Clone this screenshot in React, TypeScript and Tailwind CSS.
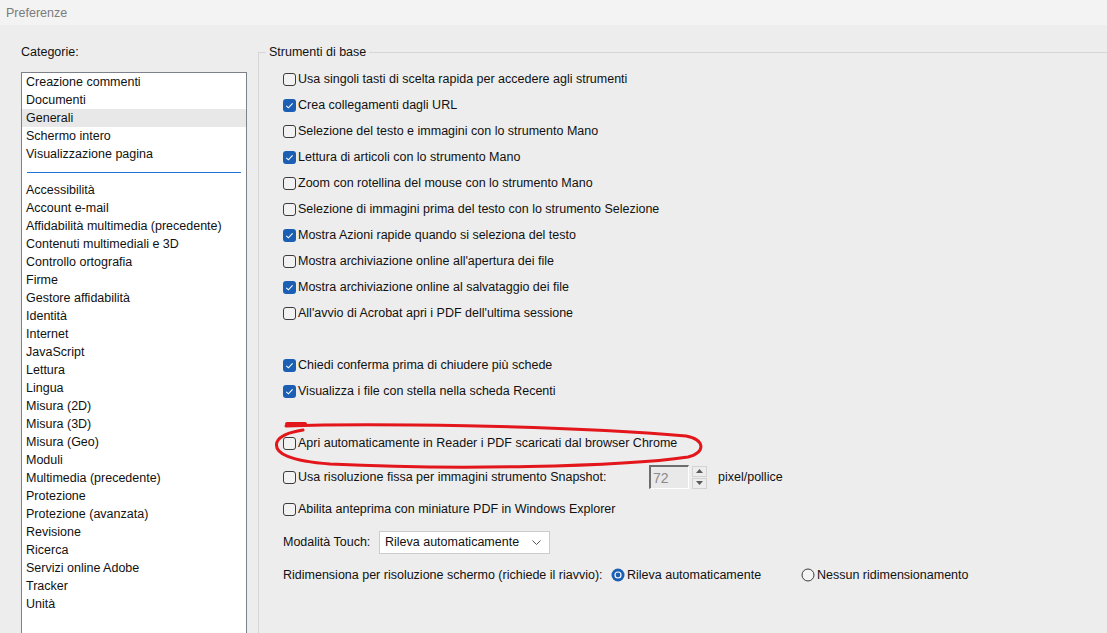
import React from 'react';

const categoriesTop = ['Creazione commenti', 'Documenti', 'Generali', 'Schermo intero', 'Visualizzazione pagina'];

const categoriesBottom = [
  'Accessibilità',
  'Account e-mail',
  'Affidabilità multimedia (precedente)',
  'Contenuti multimediali e 3D',
  'Controllo ortografia',
  'Firme',
  'Gestore affidabilità',
  'Identità',
  'Internet',
  'JavaScript',
  'Lettura',
  'Lingua',
  'Misura (2D)',
  'Misura (3D)',
  'Misura (Geo)',
  'Moduli',
  'Multimedia (precedente)',
  'Protezione',
  'Protezione (avanzata)',
  'Revisione',
  'Ricerca',
  'Servizi online Adobe',
  'Tracker',
  'Unità',
];

const group1 = [
  { label: 'Usa singoli tasti di scelta rapida per accedere agli strumenti', checked: false },
  { label: 'Crea collegamenti dagli URL', checked: true },
  { label: 'Selezione del testo e immagini con lo strumento Mano', checked: false },
  { label: 'Lettura di articoli con lo strumento Mano', checked: true },
  { label: 'Zoom con rotellina del mouse con lo strumento Mano', checked: false },
  { label: 'Selezione di immagini prima del testo con lo strumento Selezione', checked: false },
  { label: 'Mostra Azioni rapide quando si seleziona del testo', checked: true },
  { label: "Mostra archiviazione online all'apertura dei file", checked: false },
  { label: 'Mostra archiviazione online al salvataggio dei file', checked: true },
  { label: "All'avvio di Acrobat apri i PDF dell'ultima sessione", checked: false },
];

const group2 = [
  { label: 'Chiedi conferma prima di chiudere più schede', checked: true },
  { label: 'Visualizza i file con stella nella scheda Recenti', checked: true },
];

function Checkbox({ checked }: { checked: boolean }) {
  if (checked) {
    return (
      <span className="flex h-[13px] w-[13px] shrink-0 items-center justify-center rounded-[3px] bg-[#1a5fb4]">
        <svg width="13" height="13" viewBox="0 0 13 13">
          <path d="M3.3 6.8 L5.4 8.8 L9.6 4.4" fill="none" stroke="#ffffff" strokeWidth="1.1" />
        </svg>
      </span>
    );
  }
  return <span className="h-[13px] w-[13px] shrink-0 rounded-[3px] border border-[#3c3c3c] bg-[#f2f2f2]" />;
}

function CheckRow({ label, checked }: { label: string; checked: boolean }) {
  return (
    <div className="flex h-[26px] items-center gap-[2px]">
      <Checkbox checked={checked} />
      <span className="whitespace-nowrap">{label}</span>
    </div>
  );
}

function Radio({ checked }: { checked: boolean }) {
  return (
    <svg width="14" height="14" viewBox="0 0 14 14" className="shrink-0">
      {checked ? (
        <>
          <circle cx="7" cy="7" r="6.5" fill="#1a5fb4" />
          <circle cx="7" cy="7" r="3.6" fill="#ffffff" />
          <circle cx="7" cy="7" r="2.4" fill="#1a5fb4" />
        </>
      ) : (
        <circle cx="7" cy="7" r="6" fill="#f4f4f4" stroke="#3c3c3c" strokeWidth="1" />
      )}
    </svg>
  );
}

export default function App() {
  return (
    <div
      className="relative h-[633px] w-[1107px] overflow-hidden bg-[#ededed] text-[12.5px] leading-[16px] text-[#111]"
      style={{ fontFamily: '"Liberation Sans", Arial, sans-serif' }}
    >
      {/* Title bar */}
      <div className="flex h-[25px] items-center bg-[#f3f3f3] pl-[6px] text-[#7b7b7b]">Preferenze</div>

      <div className="flex">
        {/* Categories */}
        <div className="w-[258px] shrink-0 pl-[21px]">
          <div className="mt-[19px]">Categorie:</div>
          <div className="mt-[12px] h-[600px] w-[226px] border border-[#7d8189] bg-white">
            {categoriesTop.map((c) => (
              <div
                key={c}
                className={`flex h-[18px] items-center whitespace-nowrap pl-[4px] ${c === 'Generali' ? 'bg-[#e8e8e8]' : ''}`}
              >
                {c}
              </div>
            ))}
            <div className="flex h-[18px] items-center px-[5px]">
              <div className="h-[1px] w-full bg-[#1f74d6]" />
            </div>
            {categoriesBottom.map((c) => (
              <div key={c} className="flex h-[18px] items-center whitespace-nowrap pl-[4px]">
                {c}
              </div>
            ))}
          </div>
        </div>

        {/* Settings */}
        <fieldset className="mt-[19px] h-[620px] flex-1 border-t border-l border-[#d6d6d6]">
          <legend className="ml-[7px] px-[3px]">Strumenti di base</legend>
          <div className="mt-[6px] pl-[24px]">
            {group1.map((r) => (
              <CheckRow key={r.label} {...r} />
            ))}
            <div className="h-[26px]" />
            {group2.map((r) => (
              <CheckRow key={r.label} {...r} />
            ))}
            <div className="h-[26px]" />
            <CheckRow label="Apri automaticamente in Reader i PDF scaricati dal browser Chrome" checked={false} />

            <div className="mt-[8px] flex h-[26px] items-center">
              <div className="flex w-[366px] items-center gap-[2px]">
                <Checkbox checked={false} />
                <span className="whitespace-nowrap">Usa risoluzione fissa per immagini strumento Snapshot:</span>
              </div>
              <div className="flex h-[24px] w-[40px] items-center border-t-2 border-l-2 border-r border-b border-t-[#6d6d6d] border-l-[#6d6d6d] border-r-white border-b-white bg-[#e9e9e9] pl-[2px] text-[14px] text-[#8a8a8a]">
                72
              </div>
              <div className="ml-[3px] flex h-[23px] w-[15px] flex-col gap-[1px]">
                <div className="flex flex-1 items-center justify-center border border-[#d2d2d2]">
                  <svg width="7" height="4" viewBox="0 0 7 4">
                    <path d="M0 4 L3.5 0 L7 4 Z" fill="#5a5a5a" />
                  </svg>
                </div>
                <div className="flex flex-1 items-center justify-center border border-[#d2d2d2]">
                  <svg width="7" height="4" viewBox="0 0 7 4">
                    <path d="M0 0 L3.5 4 L7 0 Z" fill="#5a5a5a" />
                  </svg>
                </div>
              </div>
              <span className="ml-[11px]">pixel/pollice</span>
            </div>

            <div className="mt-[6px]">
              <CheckRow label="Abilita anteprima con miniature PDF in Windows Explorer" checked={false} />
            </div>

            <div className="mt-[7px] flex h-[26px] items-center">
              <span className="w-[96px]">Modalità Touch:</span>
              <div className="flex h-[23px] w-[171px] items-center justify-between border border-[#cccccc] bg-white pl-[5px] pr-[8px]">
                <span>Rileva automaticamente</span>
                <svg width="9" height="5" viewBox="0 0 9 5">
                  <path d="M0.5 0.5 L4.5 4.5 L8.5 0.5" fill="none" stroke="#555" strokeWidth="1" />
                </svg>
              </div>
            </div>

            <div className="mt-[7px] flex h-[26px] items-center">
              <span className="w-[328px] whitespace-nowrap">Ridimensiona per risoluzione schermo (richiede il riavvio):</span>
              <div className="flex w-[190px] items-center gap-[2px]">
                <Radio checked />
                <span>Rileva automaticamente</span>
              </div>
              <div className="flex items-center gap-[2px]">
                <Radio checked={false} />
                <span>Nessun ridimensionamento</span>
              </div>
            </div>
          </div>
        </fieldset>
      </div>

      {/* Hand-drawn red annotation */}
      <svg className="pointer-events-none absolute left-0 top-0" width="1107" height="633" viewBox="0 0 1107 633">
        <path
          d="M286 426 C360 423, 560 425, 686 436 C705 439, 706 453, 688 457 C620 467, 450 470, 330 464 C292 461, 273 454, 277 442 C280 435, 290 432, 303 430"
          fill="none"
          stroke="#e3161b"
          strokeWidth="3"
          strokeLinecap="round"
        />
        <path d="M287 424 L305 424" stroke="#e3161b" strokeWidth="4" strokeLinecap="round" />
      </svg>
    </div>
  );
}
